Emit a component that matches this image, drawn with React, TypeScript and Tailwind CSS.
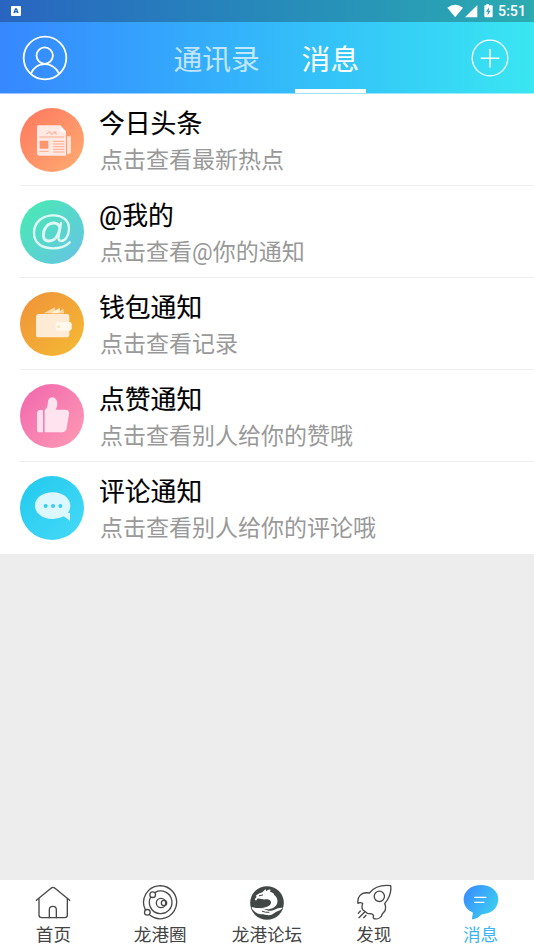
import React from 'react';

interface Message {
  title: string;
  subtitle: string;
  icon: React.ReactNode;
}

interface NavItem {
  label: string;
  icon: React.ReactNode;
  active?: boolean;
}

function Badge({ id, from, to, children }: { id: string; from: string; to: string; children: React.ReactNode }) {
  return (
    <svg viewBox="0 0 192 192" className="w-16 h-16 shrink-0">
      <defs>
        <linearGradient id={id} x1="0" y1="0" x2="1" y2="1">
          <stop offset="0.1" stopColor={from} />
          <stop offset="0.9" stopColor={to} />
        </linearGradient>
      </defs>
      <circle cx="96" cy="96" r="96" fill={`url(#${id})`} />
      {children}
    </svg>
  );
}

const messages: Message[] = [
  {
    title: '今日头条',
    subtitle: '点击查看最新热点',
    icon: (
      <Badge id="news" from="#ff7c60" to="#ffa870">
        <path d="M55 52h65l18 18v73H58q-7 0-7-7V56q0-4 4-4z" fill="#ffe9e2" />
        <path d="M120 52v14q0 5 5 5h13z" fill="#fff" />
        <path d="M141 85h9q3 0 3 3v43q0 7-7 7h-5z" fill="#ffe0d2" />
        <path d="M79 79l8-8 9 8 9-8 4 8" fill="none" stroke="#ff9c7b" strokeWidth="3" />
        <path d="M58 87h75M58 130h28M99 100h34M99 108h34M99 116h34M99 124h34M99 132h34" stroke="#ff9c7b" strokeWidth="2.5" />
        <rect x="59" y="98" width="26" height="24" rx="2" fill="#ff9672" />
      </Badge>
    ),
  },
  {
    title: '@我的',
    subtitle: '点击查看@你的通知',
    icon: (
      <Badge id="mention" from="#49e8b4" to="#65c6e2">
        <g fill="none" stroke="#dffaf4" strokeWidth="7" strokeLinecap="round" strokeLinejoin="round">
          <path d="M149 127Q131 145 99 145C64 145 42 128 42 98C42 66 68 46 100 46C129 46 147 62 147 86C147 109 134 123 124 123C115 123 114 116 116 108L123 69" />
          <path d="M120 84C117 73 111 69 102 69C83 69 70 86 70 105C70 117 77 123 87 123C102 123 115 109 120 84" strokeWidth="8.5" />
        </g>
      </Badge>
    ),
  },
  {
    title: '钱包通知',
    subtitle: '点击查看记录',
    icon: (
      <Badge id="wallet" from="#f0963a" to="#f4b734">
        <path d="M71 64l33-18 5 18z" fill="#fbdcaa" />
        <path d="M94 64l25-17 2 17z" fill="#fff0d8" />
        <path d="M112 64l18-14 2 14z" fill="#fbdcaa" />
        <rect x="48" y="66" width="100" height="70" rx="8" fill="#fdebd5" />
        <rect x="107" y="90" width="48" height="26" rx="7" fill="#fff8ed" />
        <circle cx="116" cy="104" r="4" fill="#fbdcaa" />
      </Badge>
    ),
  },
  {
    title: '点赞通知',
    subtitle: '点击查看别人给你的赞哦',
    icon: (
      <Badge id="like" from="#f26bae" to="#fd96b4">
        <path d="M59 78h10v67H57q-6 0-6-6V87q0-7 8-9z" fill="#ffe0ed" />
        <path d="M74 79Q84 70 84 52Q86 40 97 40Q109 41 112 57Q113 68 107 77H138Q149 79 147 91L140 133Q137 145 126 145H74z" fill="#ffe3ef" />
      </Badge>
    ),
  },
  {
    title: '评论通知',
    subtitle: '点击查看别人给你的评论哦',
    icon: (
      <Badge id="comment" from="#25cbee" to="#43d8f8">
        <path d="M98 49C127 49 151 66 151 89C151 98 148 105 143 110Q150 111 150 112V134L131 121Q116 129 98 129C68 129 45 112 45 89C45 66 68 49 98 49z" fill="#dcf8fe" />
        <g fill="#35cdf0">
          <circle cx="77" cy="90" r="6" />
          <circle cx="99" cy="90" r="6" />
          <circle cx="121" cy="90" r="6" />
        </g>
      </Badge>
    ),
  },
];

function LineIcon({ children }: { children: React.ReactNode }) {
  return (
    <svg viewBox="0 0 108 108" className="w-9 h-9" fill="none" stroke="#484848" strokeWidth="4" strokeLinecap="round" strokeLinejoin="round">
      {children}
    </svg>
  );
}

const navItems: NavItem[] = [
  {
    label: '首页',
    icon: (
      <LineIcon>
        <path d="M4 49L49 12Q54 8 59 12L104 49" />
        <path d="M12 44V93Q12 101 20 101H89Q97 101 97 93V44" />
        <path d="M43 101V77Q43 67 53.5 67Q64 67 64 77V101" />
      </LineIcon>
    ),
  },
  {
    label: '龙港圈',
    icon: (
      <LineIcon>
        <path d="M10 77A49.5 49.5 0 1 1 24 94" />
        <path d="M26 39A34 34 0 1 0 40 25" />
        <circle cx="57" cy="57" r="14" />
        <circle cx="66" cy="57" r="8" />
        <circle cx="32" cy="32" r="8.5" />
        <circle cx="16" cy="85" r="8.5" />
      </LineIcon>
    ),
  },
  {
    label: '龙港论坛',
    icon: (
      <svg viewBox="0 0 108 108" className="w-9 h-9">
        <circle cx="54" cy="57" r="50.5" fill="#424846" />
        <path
          d="M17 46L23 38L20 35Q30 27 40 25L50 15L51 22Q57 16 65 17L63 23Q77 27 75 32C84 38 87 47 85 56C82 68 70 75 54 76L30 73C48 71 64 67 66 57C67 49 59 45 50 46C39 47 32 42 25 44L21 50z"
          fill="#fff"
        />
        <path
          d="M8 69C20 74 32 69 45 75C57 80 64 83 76 77Q88 70 101 71C95 80 84 80 75 88C64 98 50 91 36 91C25 90 16 83 10 76z"
          fill="#fff"
        />
        <path d="M31 35L41 33M60 85Q50 86 40 82" fill="none" stroke="#424846" strokeWidth="3" strokeLinecap="round" />
      </svg>
    ),
  },
  {
    label: '发现',
    icon: (
      <LineIcon>
        <path d="M104 5C107 25 101 41 86 59C89 65 89 76 86 82C81 87 78 88 76 97C70 104 60 107 53 103C49 101 55 96 51 92C46 88 41 90 34 88L20 77Q16 70 20 58Q13 54 6 58C3 41 14 22 40 27C54 10 77 2 104 5z" />
        <circle cx="70" cy="37" r="15.5" />
        <path d="M7 88L13 81M9 101L26 84M23 101L30 94" />
      </LineIcon>
    ),
  },
  {
    label: '消息',
    active: true,
    icon: (
      <svg viewBox="0 0 108 108" className="w-9 h-9">
        <defs>
          <linearGradient id="bubble" x1="0" y1="0.1" x2="1" y2="0.7">
            <stop offset="0.1" stopColor="#3a91ff" />
            <stop offset="1" stopColor="#3bd0f0" />
          </linearGradient>
        </defs>
        <path d="M54 3C83 3 106 21 106 46C106 72 84 90 57 91Q45 103 31 106Q26 107 27 102L30 86C13 79 2 66 2 46C2 21 25 3 54 3z" fill="url(#bubble)" />
        <path d="M35 40H69M35 55H63" stroke="#fff" strokeWidth="3.5" strokeLinecap="round" />
      </svg>
    ),
  },
];

function StatusBar() {
  return (
    <div className="h-[22px] flex items-center justify-between bg-linear-to-r from-[#2965c0] to-[#2cabb1] pl-[11px] pr-2 text-white">
      <svg viewBox="0 0 10 10" className="w-2.5 h-2.5">
        <rect width="10" height="10" rx="1" fill="#fff" />
        <path d="M3 7L4.5 3h1L7 7M3.5 5.7h3" fill="none" stroke="#2b68bd" strokeWidth="1.4" />
      </svg>
      <div className="flex items-center">
        <svg viewBox="0 0 138 42" className="w-[46px] h-[14px] mr-[5px]" fill="#fff">
          <path d="M1 11Q24-6 48 11L24.5 40z" />
          <path d="M91 3V40H54z" />
          <path d="M118 0h8v4h8q3 0 3 3v30q0 3-3 3h-19q-3 0-3-3V7q0-3 3-3h3z" />
          <path d="M126 10l-9 13h6l-2 12 10-15h-6z" fill="#2c9fb5" />
        </svg>
        <span className="pt-px text-[14.2px] leading-none font-medium font-['Roboto',sans-serif]">5:51</span>
      </div>
    </div>
  );
}

function Header() {
  return (
    <header className="h-[72px] flex items-center bg-linear-to-r from-[#3787ff] to-[#3ae6f1] border-b border-white/50 pl-[22px] pr-[25px] text-white">
      <svg viewBox="0 0 46 46" className="w-[46px] h-[46px]" fill="none" stroke="#fff" strokeWidth="1.8">
        <circle cx="23" cy="23" r="21.3" />
        <circle cx="22.7" cy="20.6" r="8.2" />
        <path d="M9 38.5C12 32 17 29.2 22.7 29.2S33.5 32 37 38.5" />
      </svg>
      <nav className="self-stretch flex ml-[105.5px] text-[28.8px]">
        <button className="text-white/70 pt-px">通讯录</button>
        <button className="w-[71px] ml-[35px] pt-[5px] border-b-4 border-white">消息</button>
      </nav>
      <svg viewBox="0 0 38 38" className="w-[38px] h-[38px] ml-auto" fill="none" stroke="#fff">
        <circle cx="19" cy="19" r="17.8" strokeWidth="1.3" />
        <path d="M19 10v18.5M9.7 19.3h18.6" strokeWidth="1.5" />
      </svg>
    </header>
  );
}

function App() {
  return (
    <div className="w-full h-screen flex flex-col bg-[#ededed] overflow-hidden font-['Noto_Sans_CJK_SC',sans-serif]">
      <StatusBar />
      <Header />

      {/* Message list */}
      <ul className="bg-white font-['Roboto','Noto_Sans_CJK_SC',sans-serif]">
        {messages.map(message => (
          <li key={message.title} className="h-[92px] flex pl-5 group">
            <div className="flex-1 flex pt-[13.6px] border-b border-[#eee] group-last:border-transparent">
              {message.icon}
              <div className="ml-[15px] mt-[1.4px]">
                <h2 className="text-[25.8px] leading-[30px] text-black [-webkit-text-stroke:0.15px]">{message.title}</h2>
                <p className="mt-2 ml-px text-[23px] leading-[28px] text-[#999]">{message.subtitle}</p>
              </div>
            </div>
          </li>
        ))}
      </ul>

      {/* Bottom navigation */}
      <nav className="mt-auto h-[70px] grid grid-cols-5 bg-white">
        {navItems.map(item => (
          <button key={item.label} className={`flex flex-col items-center pt-1 ${item.active ? 'text-[#3bb4f5]' : 'text-[#444]'}`}>
            {item.icon}
            <span className="mt-[3px] text-[17.6px] leading-[22px]">{item.label}</span>
          </button>
        ))}
      </nav>
    </div>
  );
}

export default App;
